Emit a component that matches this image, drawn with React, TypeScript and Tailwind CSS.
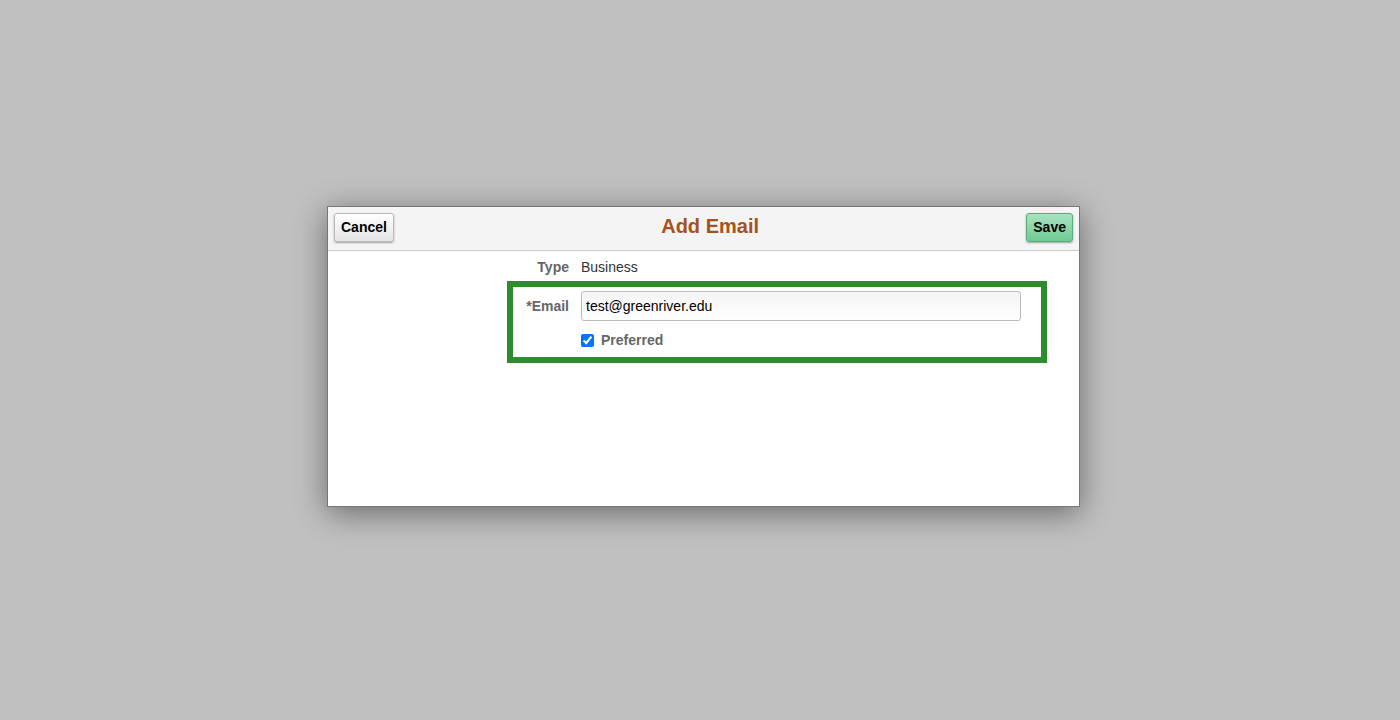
export default function App() {
  return (
    <main
      className="min-h-screen w-full bg-[#c0c0c0] pl-[327px] pt-[206px]"
      style={{ fontFamily: '"Liberation Sans", Arial, sans-serif' }}
    >
      <div className="w-[753px] h-[301px] bg-white border border-[#777] shadow-[0_6px_30px_rgba(0,0,0,0.45)] flex flex-col">
        <div className="h-[44px] bg-[#f4f4f4] border-b border-[#ccc] flex items-center justify-between px-[6px]">
          <button className="h-[29px] -mt-[2px] px-[6px] rounded-[3px] border border-[#bbb] bg-gradient-to-b from-white to-[#e4e4e4] shadow-[0_1px_2px_rgba(0,0,0,0.35)] text-[14px] font-bold text-black">
            Cancel
          </button>
          <h1 className="text-[20px] font-bold text-[#a5531a] -mt-[5px]">Add Email</h1>
          <button className="h-[29px] -mt-[2px] px-[6px] rounded-[3px] border border-[#5cab7d] bg-gradient-to-b from-[#a9e2c0] to-[#6fcb93] shadow-[0_1px_2px_rgba(0,0,0,0.35)] text-[14px] font-bold text-black">
            Save
          </button>
        </div>
        <div className="pl-[179px] pt-[6px]">
          <div className="flex items-center h-[20px] gap-[12px] text-[14px]">
            <span className="w-[62px] text-right font-bold text-[#666]">Type</span>
            <span className="text-[#333]">Business</span>
          </div>
          <div className="mt-[4px] w-[540px] border-[6px] border-[#2e8b2e] pt-[4px] pb-[6px]">
            <div className="flex items-center gap-[12px]">
              <label className="w-[56px] text-right text-[14px] font-bold text-[#666]">*Email</label>
              <input
                defaultValue="test@greenriver.edu"
                className="w-[440px] h-[30px] px-[4px] rounded-[3px] border border-[#bbb] bg-gradient-to-b from-[#f4f4f4] to-white text-[14px] text-black outline-none"
              />
            </div>
            <div className="flex items-center gap-[7px] pl-[68px] mt-[9px]">
              <input type="checkbox" defaultChecked className="w-[13px] h-[13px] m-0 accent-[#0075ff]" />
              <span className="text-[14px] font-bold text-[#666]">Preferred</span>
            </div>
          </div>
        </div>
      </div>
    </main>
  );
}
